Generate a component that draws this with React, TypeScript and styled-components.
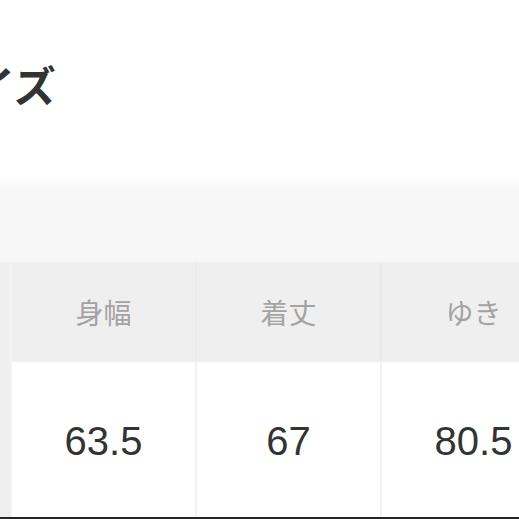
import styled, { createGlobalStyle } from 'styled-components'

const GlobalStyle = createGlobalStyle`
  html, body {
    margin: 0;
    padding: 0;
    background: #ffffff;
    overflow: hidden;
  }
  body {
    font-family: "Noto Sans CJK JP", "Noto Sans", sans-serif;
  }
`

const Page = styled.div`
  width: 519px;
  height: 519px;
  overflow: hidden;
  display: flex;
  flex-direction: column;
`

const TitleArea = styled.div`
  height: 178px;
  padding-top: 63px;
  box-sizing: border-box;
`

const Title = styled.h1`
  margin: 0 0 0 -69px;
  font-size: 42px;
  line-height: 42px;
  font-weight: 700;
  color: #333333;
  white-space: nowrap;
`

const Band = styled.div`
  height: 84px;
  background: linear-gradient(#ffffff, #f7f7f7 10px);
`

const Table = styled.div`
  display: grid;
  grid-template-columns: 12px repeat(3, 185px);
  grid-template-rows: 100px 155px;
  width: 567px;
  border-bottom: 2px solid #262626;
`

const Edge = styled.div`
  background: #efefef;
  border-right: 2px solid #f4f4f4;
  box-sizing: border-box;
`

const Cell = styled.div<{ $head?: boolean }>`
  display: flex;
  align-items: center;
  justify-content: center;
  box-sizing: border-box;
  border-right: 2px solid ${p => (p.$head ? '#ebebeb' : '#f2f2f2')};
  background: ${p => (p.$head ? '#efefef' : '#ffffff')};
  color: ${p => (p.$head ? '#a3a3a3' : '#333333')};
  font-size: ${p => (p.$head ? '28px' : '40px')};
  font-family: ${p =>
    p.$head
      ? '"Noto Sans CJK JP", sans-serif'
      : '"Liberation Sans", Arial, sans-serif'};
  padding-top: ${p => (p.$head ? '0' : '4px')};
`

const heads = ['身幅', '着丈', 'ゆき']
const values = ['63.5', '67', '80.5']

export default function App() {
  return (
    <Page>
      <GlobalStyle />
      <TitleArea>
        <Title>サイズ</Title>
      </TitleArea>
      <Band />
      <Table>
        <Edge />
        {heads.map(h => (
          <Cell $head key={h}>{h}</Cell>
        ))}
        <Edge />
        {values.map(v => (
          <Cell key={v}>{v}</Cell>
        ))}
      </Table>
    </Page>
  )
}
